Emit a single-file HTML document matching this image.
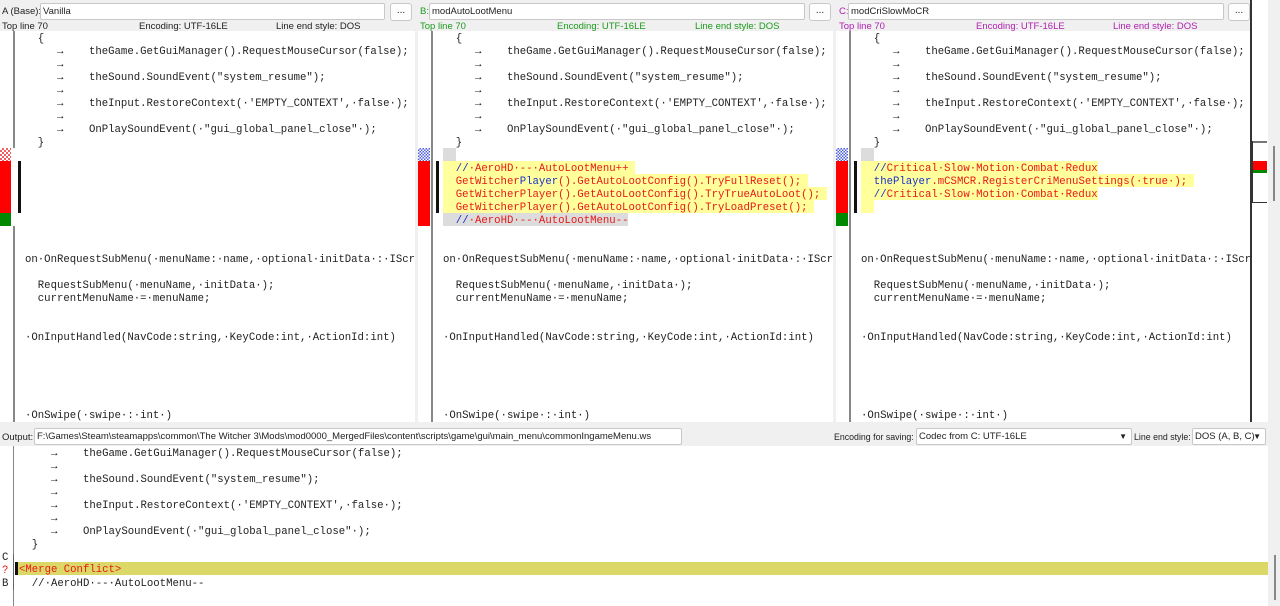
<!DOCTYPE html>
<html><head><meta charset="utf-8"><style>
*{margin:0;padding:0;box-sizing:border-box}
body{width:1280px;height:606px;overflow:hidden;background:#f0f0f0;font-family:"Liberation Sans",sans-serif;font-size:9.5px;color:#222;position:relative}
.abs{position:absolute;white-space:nowrap}
.inp{position:absolute;background:#fff;border:1px solid #c8c8c8;border-radius:2px;height:17px;font-size:9.5px;line-height:15px;padding-left:2px;white-space:nowrap;overflow:hidden}
.btn{position:absolute;background:#fdfdfd;border:1px solid #c8c8c8;border-radius:3px;height:18px;width:22px;text-align:center;line-height:13px;font-size:10px}
.ta{position:absolute;background:#fff;overflow:hidden}
.ln{position:absolute;left:0;height:13px;font-family:"Liberation Mono",monospace;font-size:10.67px;line-height:17px;white-space:pre;color:#222}
.a{display:inline-block;width:1ch;text-align:left}
.r{color:#e81818}.b{color:#1830c8}
.y{background:#ffff9c}.g{background:#dcdcdc}
.vl{position:absolute;width:2px;background:#888}
</style></head><body>

<div class="abs" style="left:2px;top:6px">A (Base):</div>
<div class="inp" style="left:40px;top:3px;width:345px">Vanilla</div>
<div class="btn" style="left:390px;top:3px">...</div>
<div class="abs" style="left:2px;top:21px">Top line 70</div>
<div class="abs" style="left:139px;top:21px">Encoding: UTF-16LE</div>
<div class="abs" style="left:276px;top:21px">Line end style: DOS</div>

<div class="abs" style="left:420px;top:6px;color:#1a9a1a">B:</div>
<div class="inp" style="left:429px;top:3px;width:376px">modAutoLootMenu</div>
<div class="btn" style="left:809px;top:3px">...</div>
<div class="abs" style="left:420px;top:21px;color:#1a9a1a">Top line 70</div>
<div class="abs" style="left:557px;top:21px;color:#1a9a1a">Encoding: UTF-16LE</div>
<div class="abs" style="left:695px;top:21px;color:#1a9a1a">Line end style: DOS</div>

<div class="abs" style="left:839px;top:6px;color:#b020b0">C:</div>
<div class="inp" style="left:848px;top:3px;width:376px">modCriSlowMoCR</div>
<div class="btn" style="left:1228px;top:3px">...</div>
<div class="abs" style="left:839px;top:21px;color:#b020b0">Top line 70</div>
<div class="abs" style="left:976px;top:21px;color:#b020b0">Encoding: UTF-16LE</div>
<div class="abs" style="left:1113px;top:21px;color:#b020b0">Line end style: DOS</div>

<!-- Pane A -->
<div class="ta" style="left:0;top:31px;width:415px;height:391px">
 <div class="vl" style="left:13px;top:0;height:117px"></div>
 <div class="vl" style="left:13px;top:195px;height:200px"></div>
 <div class="abs" style="left:0;top:117px;width:11px;height:13px;background:repeating-conic-gradient(#f06060 0 25%,#fff 0 50%) 0 0/4px 4px"></div>
 <div class="abs" style="left:0;top:130px;width:11px;height:52px;background:#f00"></div>
 <div class="abs" style="left:0;top:182px;width:11px;height:13px;background:#080"></div>
 <div class="abs" style="left:18px;top:130px;width:3px;height:52px;background:#111"></div>
 <div style="position:absolute;left:25px;top:0">
  <div class="ln" style="top:0">  {</div>
  <div class="ln" style="top:13px">     <span class="a">→</span>    theGame.GetGuiManager().RequestMouseCursor(false);</div>
  <div class="ln" style="top:26px">     <span class="a">→</span></div>
  <div class="ln" style="top:39px">     <span class="a">→</span>    theSound.SoundEvent("system_resume");</div>
  <div class="ln" style="top:52px">     <span class="a">→</span></div>
  <div class="ln" style="top:65px">     <span class="a">→</span>    theInput.RestoreContext(·'EMPTY_CONTEXT',·false·);</div>
  <div class="ln" style="top:78px">     <span class="a">→</span></div>
  <div class="ln" style="top:91px">     <span class="a">→</span>    OnPlaySoundEvent(·"gui_global_panel_close"·);</div>
  <div class="ln" style="top:104px">  }</div>
  <div class="ln" style="top:221px">on·OnRequestSubMenu(·menuName:·name,·optional·initData·:·IScr</div>
  <div class="ln" style="top:247px">  RequestSubMenu(·menuName,·initData·);</div>
  <div class="ln" style="top:260px">  currentMenuName·=·menuName;</div>
  <div class="ln" style="top:299px">·OnInputHandled(NavCode:string,·KeyCode:int,·ActionId:int)</div>
  <div class="ln" style="top:377px">·OnSwipe(·swipe·:·int·)</div>
 </div>
</div>

<!-- Pane B -->
<div class="ta" style="left:418px;top:31px;width:415px;height:391px">
 <div class="vl" style="left:13px;top:0;height:395px"></div>
 <div class="abs" style="left:0;top:117px;width:12px;height:13px;background:repeating-conic-gradient(#5060e0 0 25%,#fff 0 50%) 0 0/3px 3px"></div>
 <div class="abs" style="left:0;top:130px;width:12px;height:65px;background:#f00"></div>
 <div class="abs" style="left:18px;top:130px;width:3px;height:52px;background:#111"></div>
 <div style="position:absolute;left:25px;top:0">
  <div class="ln" style="top:0">  {</div>
  <div class="ln" style="top:13px">     <span class="a">→</span>    theGame.GetGuiManager().RequestMouseCursor(false);</div>
  <div class="ln" style="top:26px">     <span class="a">→</span></div>
  <div class="ln" style="top:39px">     <span class="a">→</span>    theSound.SoundEvent("system_resume");</div>
  <div class="ln" style="top:52px">     <span class="a">→</span></div>
  <div class="ln" style="top:65px">     <span class="a">→</span>    theInput.RestoreContext(·'EMPTY_CONTEXT',·false·);</div>
  <div class="ln" style="top:78px">     <span class="a">→</span></div>
  <div class="ln" style="top:91px">     <span class="a">→</span>    OnPlaySoundEvent(·"gui_global_panel_close"·);</div>
  <div class="ln" style="top:104px">  }</div>
  <div class="ln g" style="top:117px">  </div>
  <div class="ln y r" style="top:130px">  <span class="b">//</span>·AeroHD·--·AutoLootMenu++ </div>
  <div class="ln y r" style="top:143px">  GetWitcher<span class="b">Player</span>().GetAutoLootConfig().TryFullReset(); </div>
  <div class="ln y r" style="top:156px">  GetWitcherPlayer().GetAutoLootConfig().TryTrueAutoLoot(); </div>
  <div class="ln y r" style="top:169px">  GetWitcherPlayer().GetAutoLootConfig().TryLoadPreset(); </div>
  <div class="ln g r" style="top:182px">  <span class="b">//</span>·AeroHD·--·AutoLootMenu--</div>
  <div class="ln" style="top:221px">on·OnRequestSubMenu(·menuName:·name,·optional·initData·:·IScr</div>
  <div class="ln" style="top:247px">  RequestSubMenu(·menuName,·initData·);</div>
  <div class="ln" style="top:260px">  currentMenuName·=·menuName;</div>
  <div class="ln" style="top:299px">·OnInputHandled(NavCode:string,·KeyCode:int,·ActionId:int)</div>
  <div class="ln" style="top:377px">·OnSwipe(·swipe·:·int·)</div>
 </div>
</div>

<!-- Pane C -->
<div class="ta" style="left:836px;top:31px;width:414px;height:391px">
 <div class="vl" style="left:13px;top:0;height:395px"></div>
 <div class="abs" style="left:0;top:117px;width:12px;height:13px;background:repeating-conic-gradient(#5060e0 0 25%,#fff 0 50%) 0 0/3px 3px"></div>
 <div class="abs" style="left:0;top:130px;width:12px;height:52px;background:#f00"></div>
 <div class="abs" style="left:0;top:182px;width:12px;height:13px;background:#080"></div>
 <div class="abs" style="left:18px;top:130px;width:3px;height:52px;background:#111"></div>
 <div style="position:absolute;left:25px;top:0">
  <div class="ln" style="top:0">  {</div>
  <div class="ln" style="top:13px">     <span class="a">→</span>    theGame.GetGuiManager().RequestMouseCursor(false);</div>
  <div class="ln" style="top:26px">     <span class="a">→</span></div>
  <div class="ln" style="top:39px">     <span class="a">→</span>    theSound.SoundEvent("system_resume");</div>
  <div class="ln" style="top:52px">     <span class="a">→</span></div>
  <div class="ln" style="top:65px">     <span class="a">→</span>    theInput.RestoreContext(·'EMPTY_CONTEXT',·false·);</div>
  <div class="ln" style="top:78px">     <span class="a">→</span></div>
  <div class="ln" style="top:91px">     <span class="a">→</span>    OnPlaySoundEvent(·"gui_global_panel_close"·);</div>
  <div class="ln" style="top:104px">  }</div>
  <div class="ln g" style="top:117px">  </div>
  <div class="ln y r" style="top:130px">  <span class="b">//</span>Critical·Slow·Motion·Combat·Redux</div>
  <div class="ln y r" style="top:143px">  <span class="b">thePlayer</span>.mCSMCR.RegisterCriMenuSettings(·true·); </div>
  <div class="ln y r" style="top:156px">  <span class="b">//</span>Critical·Slow·Motion·Combat·Redux</div>
  <div class="ln y" style="top:169px">  </div>
  <div class="ln" style="top:221px">on·OnRequestSubMenu(·menuName:·name,·optional·initData·:·IScr</div>
  <div class="ln" style="top:247px">  RequestSubMenu(·menuName,·initData·);</div>
  <div class="ln" style="top:260px">  currentMenuName·=·menuName;</div>
  <div class="ln" style="top:299px">·OnInputHandled(NavCode:string,·KeyCode:int,·ActionId:int)</div>
  <div class="ln" style="top:377px">·OnSwipe(·swipe·:·int·)</div>
 </div>
</div>

<!-- Overview column -->
<div class="abs" style="left:1250px;top:0;width:2px;height:422px;background:#333"></div>
<div class="abs" style="left:1252px;top:0;width:16px;height:422px;background:#fff"></div>
<div class="abs" style="left:1252px;top:141px;width:15px;height:2px;background:#777"></div>
<div class="abs" style="left:1252px;top:161px;width:15px;height:9px;background:#f00"></div>
<div class="abs" style="left:1252px;top:170px;width:15px;height:3px;background:#080"></div>
<div class="abs" style="left:1252px;top:202px;width:15px;height:1px;background:#333"></div>
<div class="abs" style="left:1252px;top:141px;width:1px;height:62px;background:#333"></div>
<div class="abs" style="left:1268px;top:0;width:12px;height:422px;background:#f0f0f0"></div>
<div class="abs" style="left:1273px;top:146px;width:2px;height:55px;background:#888"></div>

<!-- Output header -->
<div class="abs" style="left:0;top:422px;width:1280px;height:24px;background:#f0f0f0"></div>
<div class="abs" style="left:2px;top:432px">Output:</div>
<div class="inp" style="left:34px;top:428px;width:648px">F:\Games\Steam\steamapps\common\The Witcher 3\Mods\mod0000_MergedFiles\content\scripts\game\gui\main_menu\commonIngameMenu.ws</div>
<div class="abs" style="left:834px;top:432px;font-size:8.8px">Encoding for saving:</div>
<div class="inp" style="left:916px;top:428px;width:216px">Codec from C: UTF-16LE<span style="position:absolute;right:4px;top:0;font-size:8px">▼</span></div>
<div class="abs" style="left:1134px;top:432px;font-size:8.8px">Line end style:</div>
<div class="inp" style="left:1192px;top:428px;width:74px">DOS (A, B, C)<span style="position:absolute;right:4px;top:0;font-size:8px">▼</span></div>

<!-- Output pane -->
<div class="ta" style="left:0;top:446px;width:1268px;height:160px">
 <div class="vl" style="left:13px;top:0;height:110px;width:1px"></div>
 <div class="vl" style="left:13px;top:144px;height:20px;width:1px"></div>
 <div class="ln" style="left:2px;top:104px">C</div>
 <div class="ln r" style="left:2px;top:117px">?</div>
 <div class="ln" style="left:2px;top:130px">B</div>
 <div class="abs" style="left:11px;top:108px;width:3px;height:36px;border-right:1px solid #666"></div>
 <div class="abs" style="left:18px;top:116px;width:1250px;height:13px;background:#dcd868"></div>
 <div class="abs" style="left:15px;top:116px;width:3px;height:13px;background:#111"></div>
 <div style="position:absolute;left:19px;top:0">
  <div class="ln" style="top:0">     <span class="a">→</span>    theGame.GetGuiManager().RequestMouseCursor(false);</div>
  <div class="ln" style="top:13px">     <span class="a">→</span></div>
  <div class="ln" style="top:26px">     <span class="a">→</span>    theSound.SoundEvent("system_resume");</div>
  <div class="ln" style="top:39px">     <span class="a">→</span></div>
  <div class="ln" style="top:52px">     <span class="a">→</span>    theInput.RestoreContext(·'EMPTY_CONTEXT',·false·);</div>
  <div class="ln" style="top:65px">     <span class="a">→</span></div>
  <div class="ln" style="top:78px">     <span class="a">→</span>    OnPlaySoundEvent(·"gui_global_panel_close"·);</div>
  <div class="ln" style="top:91px">  }</div>
  <div class="ln r" style="top:116px">&lt;Merge Conflict&gt;</div>
  <div class="ln" style="top:130px">  //·AeroHD·--·AutoLootMenu--</div>
 </div>
</div>
<div class="abs" style="left:1268px;top:446px;width:12px;height:160px;background:#f0f0f0"></div>
<div class="abs" style="left:1274px;top:555px;width:2px;height:45px;background:#888"></div>
</body></html>
